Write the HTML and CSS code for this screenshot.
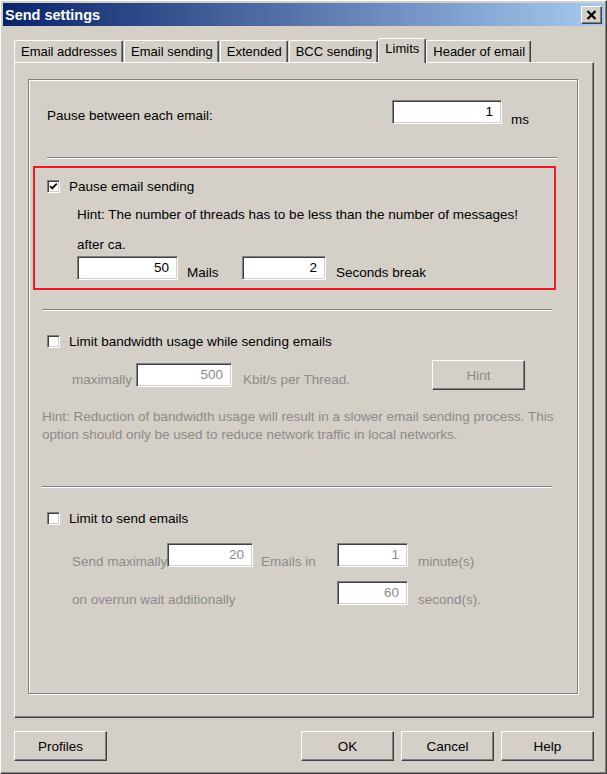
FILE: index.html
```html
<!DOCTYPE html>
<html lang="en">
<head>
    <meta charset="UTF-8">
    <title>Send settings</title>
    <link rel="stylesheet" href="styles.css">
</head>
<body>
    <div class="window">
        <!-- title bar -->
        <div class="titlebar">
            <span class="title">Send settings</span>
            <button class="close">
                <svg width="11" height="10" viewBox="0 0 11 10"><path d="M1.5 1 L9.5 9 M9.5 1 L1.5 9" stroke="#000" stroke-width="2.2"/></svg>
            </button>
        </div>

        <div class="client">
            <!-- tabs -->
            <div class="tabs">
                <div class="tab">Email addresses</div>
                <div class="tab">Email sending</div>
                <div class="tab">Extended</div>
                <div class="tab">BCC sending</div>
                <div class="tab active">Limits</div>
                <div class="tab">Header of email</div>
            </div>

            <div class="page">
                <div class="group">
                    <!-- pause between mails -->
                    <div class="row pause-row">
                        <span class="label pause-label">Pause between each email:</span>
                        <input type="text" class="field w-pause" value="1">
                        <span class="label unit-ms">ms</span>
                    </div>

                    <div class="sep sep-first"></div>

                    <!-- pause email sending -->
                    <div class="redbox">
                        <label class="check-row">
                            <span class="checkbox checked">
                                <svg width="11" height="11" viewBox="0 0 11 11"><path d="M2 5 L4.2 7.4 L8.8 2.6" fill="none" stroke="#000" stroke-width="1.7"/></svg>
                            </span>
                            <span>Pause email sending</span>
                        </label>
                        <div class="indent hint-threads">Hint: The number of threads has to be less than the number of messages!</div>
                        <div class="indent after">after ca.</div>
                        <div class="row indent bottom-row">
                            <input type="text" class="field w-mails" value="50">
                            <span class="label unit-mails">Mails</span>
                            <input type="text" class="field w-secs" value="2">
                            <span class="label unit-secs">Seconds break</span>
                        </div>
                    </div>

                    <div class="sep"></div>

                    <!-- bandwidth -->
                    <label class="check-row section-check">
                        <span class="checkbox"></span>
                        <span>Limit bandwidth usage while sending emails</span>
                    </label>
                    <div class="row bw-row">
                        <span class="label off lbl-max">maximally</span>
                        <input type="text" class="field w-bw" value="500" disabled>
                        <span class="label off lbl-kbit">Kbit/s per Thread.</span>
                        <button class="btn btn-hint" disabled>Hint</button>
                    </div>
                    <div class="bw-hint off">Hint: Reduction of bandwidth usage will result in a slower email sending process. This<br>option should only be used to reduce network traffic in local networks.</div>

                    <div class="sep sep-limit"></div>

                    <!-- limit count -->
                    <label class="check-row section-check">
                        <span class="checkbox"></span>
                        <span>Limit to send emails</span>
                    </label>
                    <div class="row limit-row">
                        <span class="label off lbl-send">Send maximally</span>
                        <input type="text" class="field w-count" value="20" disabled>
                        <span class="label off lbl-emails">Emails in</span>
                        <input type="text" class="field w-time" value="1" disabled>
                        <span class="label off lbl-unit">minute(s)</span>
                    </div>
                    <div class="row limit-row overrun-row">
                        <span class="label off lbl-overrun">on overrun wait additionally</span>
                        <input type="text" class="field w-time" value="60" disabled>
                        <span class="label off lbl-unit">second(s).</span>
                    </div>
                </div>
            </div>

            <!-- dialog buttons -->
            <div class="footer">
                <button class="btn">Profiles</button>
                <div class="spacer"></div>
                <button class="btn">OK</button>
                <button class="btn">Cancel</button>
                <button class="btn">Help</button>
            </div>
        </div>
    </div>
</body>
</html>
```

FILE: styles.css
```css
/* base */
* {
    box-sizing: border-box;
}

body {
    margin: 0;
    background: #d4d0c8;
    font-family: "Liberation Sans", Arial, sans-serif;
    font-size: 13.5px;
    color: #000;
}

/* window frame */
.window {
    width: 607px;
    height: 774px;
    padding: 2px;
    border: 1px solid;
    border-color: #fff #404040 #404040 #fff;
    box-shadow: inset -1px -1px 0 #808080;
    display: flex;
    flex-direction: column;
}

.titlebar {
    height: 23px;
    padding: 0 2px;
    display: flex;
    align-items: center;
    justify-content: space-between;
    background: linear-gradient(to right, #0a246a, #a6caf0);
    color: #fff;
    font-weight: bold;
    font-size: 14.5px;
}

.close {
    width: 21px;
    height: 18px;
    padding: 0;
    display: flex;
    align-items: center;
    justify-content: center;
    background: #d4d0c8;
    border: 1px solid;
    border-color: #fff #404040 #404040 #fff;
    box-shadow: inset -1px -1px 0 #808080;
}

.client {
    flex: 1;
    padding: 12px 10px 0 11px;
}

/* tabs */
.tabs {
    height: 24px;
    display: flex;
    align-items: flex-end;
    font-size: 13px;
}

.tab {
    height: 22px;
    padding: 0 5px 0 6px;
    margin-right: 1px;
    line-height: 21px;
    border: 1px solid;
    border-bottom: none;
    border-color: #fff #404040 transparent #fff;
    border-radius: 2px 2px 0 0;
    box-shadow: inset -1px 0 0 #808080;
}

.tab.active {
    height: 25px;
    margin: 0 0 -1px -1px;
    padding: 0 6px;
    line-height: 20px;
    background: #d4d0c8;
    position: relative;
    z-index: 1;
}

.page {
    height: 656px;
    padding: 16px 0 0 13px;
    border: 1px solid;
    border-color: #fff #404040 #404040 #fff;
    box-shadow: inset -1px -1px 0 #808080;
}

/* etched group */
.group {
    width: 550px;
    height: 615px;
    border: 1px solid #808080;
    box-shadow: inset 1px 1px 0 #fff, 1px 1px 0 #fff;
}

.sep {
    height: 2px;
    margin: 19px 25px 0 13px;
    border-top: 1px solid #808080;
    border-bottom: 1px solid #fff;
}

.sep-first {
    margin: 29px 20px 0 18px;
}

.sep-limit {
    margin-top: 42px;
}

.row {
    display: flex;
}

.label {
    line-height: 16px;
    white-space: nowrap;
}

.off {
    color: #8d8b87;
}

/* text fields */
.field {
    height: 24px;
    padding: 0 8px 2px 4px;
    font-family: inherit;
    font-size: 13.5px;
    color: #000;
    text-align: right;
    background: #fff;
    border: 1px solid;
    border-color: #808080 #fff #fff #808080;
    box-shadow: inset 1px 1px 0 #404040, inset -1px -1px 0 #d4d0c8;
    outline: none;
}

.field:disabled {
    color: #8d8b87;
    background: #fff;
}

.w-pause { width: 110px; }
.w-mails { width: 101px; }
.w-secs { width: 84px; }
.w-bw { width: 96px; }
.w-count { width: 86px; }
.w-time { width: 71px; }

/* pause row */
.pause-row {
    margin-top: 20px;
    padding-left: 18px;
    align-items: flex-start;
}

.pause-label {
    width: 345px;
    margin-top: 8px;
}

.unit-ms {
    margin: 12px 0 0 9px;
}

/* red box */
.redbox {
    height: 124px;
    margin: 7px 21px 0 4px;
    padding: 10px 0 0 12px;
    border: 2px solid #ed1c24;
}

.check-row {
    height: 16px;
    display: flex;
    align-items: center;
    gap: 9px;
}

.checkbox {
    width: 13px;
    height: 13px;
    display: flex;
    align-items: center;
    justify-content: center;
    background: #fff;
    border: 1px solid;
    border-color: #808080 #fff #fff #808080;
    box-shadow: inset 1px 1px 0 #404040, inset -1px -1px 0 #d4d0c8;
}

.indent {
    padding-left: 30px;
    line-height: 16px;
}

.hint-threads {
    margin-top: 13px;
}

.after {
    margin-top: 14px;
}

.bottom-row {
    margin-top: 3px;
    align-items: flex-end;
}

.bottom-row .label {
    margin-bottom: -1px;
}

.unit-mails {
    width: 64px;
    padding-left: 9px;
}

.unit-secs {
    padding-left: 10px;
}

/* bandwidth */
.section-check {
    margin: 22px 0 0 18px;
}

.bw-row {
    margin-top: 11px;
    padding-left: 43px;
    align-items: center;
}

.lbl-max {
    width: 64px;
    padding-top: 9px;
}

.lbl-kbit {
    width: 200px;
    padding: 9px 0 0 11px;
}

.bw-hint {
    margin: 18px 20px 0 13px;
    line-height: 18px;
}

/* limit count */
.limit-row {
    margin-top: 17px;
    padding-left: 43px;
    align-items: flex-end;
}

.limit-row .label {
    margin-bottom: -3px;
}

.overrun-row {
    margin-top: 14px;
}

.lbl-send { width: 95px; }

.lbl-emails {
    width: 84px;
    padding-left: 8px;
}

.lbl-overrun { width: 265px; }

.lbl-unit {
    padding-left: 10px;
}

/* buttons */
.btn {
    width: 93px;
    height: 30px;
    padding: 0;
    font-family: inherit;
    font-size: 13.5px;
    color: #000;
    background: #d4d0c8;
    border: 1px solid;
    border-color: #fff #404040 #404040 #fff;
    box-shadow: inset -1px -1px 0 #808080;
}

.btn:disabled {
    color: #8d8b87;
}

.btn-hint {
    height: 30px;
}

.footer {
    margin-top: 13px;
    display: flex;
    gap: 7px;
}

.spacer {
    flex: 1;
}
```
